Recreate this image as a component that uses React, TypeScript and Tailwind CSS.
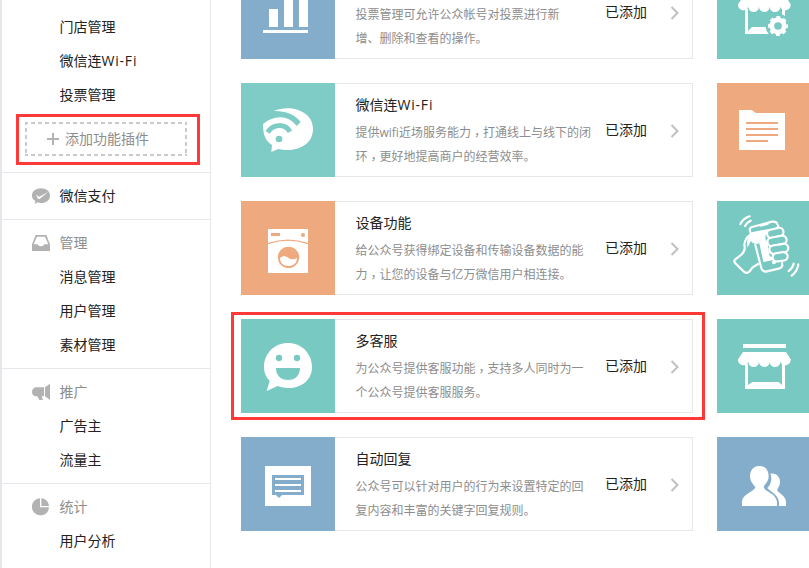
import React from "react";

type IconProps = { box: string; children: React.ReactNode };

const Drawing = ({ box, children }: IconProps) => (
  <svg viewBox={box} className="block h-[94px] w-[94px]" fill="#fff">
    {children}
  </svg>
);

const ChartIcon = () => (
  <Drawing box="33 -105 282 282">
    <path d="M117 27h27v54h-27zM162-9h27v90h-27zM207-40h27V81h-27zM99 90h135v9H99z" />
  </Drawing>
);

const WifiIcon = () => (
  <Drawing box="33 249 282 282">
    <path d="M132 333C176 312 249 330 249 386C249 439 195 457 145 447L124 456L126 435C108 424 99 408 99 372C132 344 176 344 200 378L212 366C195 343 165 332 132 333Z" />
    <path d="M113 397C129 371 165 370 180 395" fill="none" stroke="#7eccc5" strokeWidth="15" />
    <circle cx="147" cy="417" r="10" fill="#7eccc5" />
  </Drawing>
);

const WasherIcon = () => (
  <Drawing box="33 33 282 282">
    <path d="M114 117h120v132H114z" />
    <g fill="#eea97e">
      <path d="M123 129h27v9h-27z" />
      <circle cx="219" cy="135" r="6" />
      <circle cx="175.500" cy="202" r="32" />
      <path d="M114 161Q174 140 234 161" fill="none" stroke="#eea97e" strokeWidth="4" />
    </g>
    <path d="M150 204C158 196 168 198 176 204S194 208 201 203C201 220 189 228 175 228S150 219 150 204Z" />
  </Drawing>
);

const SmileIcon = () => (
  <Drawing box="33 387 282 282">
    <path d="M174 459C214 459 246 490 246 531C246 570 215 594 175 594C163 594 154 592 143 588L110 603L119 573C108 562 102 549 102 531C102 490 134 459 174 459Z" />
    <g fill="#78c9c2">
      <circle cx="147" cy="504" r="9.500" />
      <circle cx="201" cy="504" r="9.500" />
      <path d="M138 534h72C210 556 196 570 174 570S138 556 138 534Z" />
    </g>
  </Drawing>
);

const ReplyIcon = () => (
  <Drawing box="33 201 282 282">
    <path d="M105 288h138v120H105z" />
    <path d="M126 315h96v60h-66l-9 9-9-9h-12z" fill="#84adcc" />
    <path d="M135 324h78v6h-78zM135 342h78v6h-78zM135 360h78v6h-78z" />
  </Drawing>
);

const Awning = () => (
  <path d="M129 486h129l14 22v3a16 16 0 0 1-31 4a16 16 0 0 1-32 0a16 16 0 0 1-32 0a16 16 0 0 1-32 0a16 16 0 0 1-31-4v-3z" />
);

const ShopIcon = () => (
  <Drawing box="51 387 282 282">
    <path d="M129 462h129v12H129z" />
    <Awning />
    <path d="M135 522h9v63l13-9h79l10 9v-63h9v75H135z" />
  </Drawing>
);

const ShopGearIcon = () => (
  <Drawing box="51 -105 282 282">
    <g transform="translate(0 -495)">
      <Awning />
    </g>
    <path d="M135 27h9v66l12-12h41q1 12 9 21h-71zM246 27h9v21l-9-5z" />
    <circle cx="234" cy="78" r="18.500" fill="none" stroke="#fff" strokeWidth="14" />
    <circle cx="234" cy="78" r="26.500" fill="none" stroke="#fff" strokeWidth="7" strokeDasharray="11.800 9.014" strokeDashoffset="5.900" />
  </Drawing>
);

const FolderIcon = () => (
  <Drawing box="51 249 282 282">
    <path d="M117 330h36q5 0 9 5l6 4h87v111H117z" />
    <path d="M138 366h96v6h-96zM138 384h96v6h-96zM138 402h96v6h-96zM138 420h66v6h-66z" fill="#eea97e" />
  </Drawing>
);

const ShakeIcon = () => (
  <Drawing box="-39 -21 282 282">
    <g fill="none" stroke="#fff" strokeWidth="6.500" strokeLinecap="round" strokeLinejoin="round">
      <path d="M31 48Q40 31 59 25M45 54Q50 43 62 38" />
      <path d="M205 169Q202 190 185 203M191 167Q188 180 176 189" />
      <path d="M62 75L59 66Q59 59 66 57L126 41Q139 39 142 48L146 59" />
      <path d="M62 79Q45 90 43 110Q48 128 34 140L16 154Q10 160 16 166L42 191Q51 199 59 190L67 179L84 168" />
      <path d="M76 111L94 181Q98 193 111 190L149 181Q160 176 156 165" />
      <path d="M92 54L114 48" strokeWidth="4.500" />
    </g>
    <path d="M64 73L120 62L108 80Q102 90 112 102L119 145L130 148L132 156L100 162L88 106Q72 112 62 99L53 119Q46 93 64 73Z" />
    <g fill="#78c9c2" stroke="#fff" strokeWidth="6.500">
      <rect x="111" y="62" width="50" height="25" rx="12.500" transform="rotate(-13 136 75)" />
      <rect x="112" y="86" width="58" height="25" rx="12.500" transform="rotate(-11 141 98)" />
      <rect x="118" y="110" width="57" height="25" rx="12.500" transform="rotate(-9 146 122)" />
      <rect x="128" y="134" width="45" height="25" rx="12.500" transform="rotate(-8 150 146)" />
    </g>
    <circle cx="132" cy="163" r="6" />
  </Drawing>
);

const UsersIcon = () => (
  <Drawing box="51 201 282 282">
    <path d="M211 311C230 307 240 322 240 335C240 350 231 355 232 361C233 369 258 376 258 397V408H237V397C235 373 210 364 202 354C214 341 217 324 211 311Z" />
    <path d="M178 288C196 288 206 301 206 319C206 334 195 343 191 350C193 366 231 369 231 398V408H126V398C126 371 163 366 166 351C160 344 150 334 150 319C150 301 160 288 178 288Z" />
  </Drawing>
);

function Line({ text }: { text: string }) {
  const parts = text.split("，");
  return (
    <div className="h-[24px]">
      {parts.map((part, i) => (
        <React.Fragment key={i}>
          {i > 0 && <span className="relative top-[3px] font-['Noto_Sans_CJK_TC',sans-serif] leading-[12px]">，</span>}
          {part}
        </React.Fragment>
      ))}
    </div>
  );
}

const WifiName = () => (
  <>
    微信连<span className="tracking-[0.8px]">Wi-Fi</span>
  </>
);

type CardProps = { color: string; icon: React.ReactNode; title?: React.ReactNode; lines: string[] };

function Card({ color, icon, title, lines }: CardProps) {
  return (
    <div className="flex h-[94px] w-[452px] shrink-0">
      <div className={`w-[94px] shrink-0 ${color}`}>{icon}</div>
      <div className="flex flex-1 items-center border border-l-0 border-[#e7e7eb]">
        <div className="w-[270px] shrink-0 whitespace-nowrap pl-[20.5px] pt-[3px]">
          <div className="h-[22px] text-[14px] leading-[22px] text-[#222]">{title}</div>
          <div className="pt-[5px] text-[12px] leading-[24px] text-[#8d8d8d]">
            {lines.map((l) => (
              <Line key={l} text={l} />
            ))}
          </div>
        </div>
        <span className="w-[65px] shrink-0 text-[14px] leading-[20px] text-[#222]">已添加</span>
        <svg viewBox="0 0 10 14" className="mt-[2px] h-[14px] w-[10px]" fill="none" stroke="#c0c0c0" strokeWidth="2">
          <path d="M1.500 1L7.500 7L1.500 13" />
        </svg>
      </div>
    </div>
  );
}

const rows = [
  {
    card: { color: "bg-[#84adcc]", icon: <ChartIcon />, lines: ["投票管理可允许公众帐号对投票进行新", "增、删除和查看的操作。"] },
    side: { color: "bg-[#78c9c2]", icon: <ShopGearIcon /> },
  },
  {
    card: { color: "bg-[#7eccc5]", icon: <WifiIcon />, title: <WifiName />, lines: ["提供wifi近场服务能力，打通线上与线下的闭", "环，更好地提高商户的经营效率。"] },
    side: { color: "bg-[#eea97e]", icon: <FolderIcon /> },
  },
  {
    card: { color: "bg-[#eea97e]", icon: <WasherIcon />, title: "设备功能", lines: ["给公众号获得绑定设备和传输设备数据的能", "力，让您的设备与亿万微信用户相连接。"] },
    side: { color: "bg-[#78c9c2]", icon: <ShakeIcon /> },
  },
  {
    card: { color: "bg-[#78c9c2]", icon: <SmileIcon />, title: "多客服", lines: ["为公众号提供客服功能，支持多人同时为一", "个公众号提供客服服务。"] },
    side: { color: "bg-[#78c9c2]", icon: <ShopIcon /> },
    marked: true,
  },
  {
    card: { color: "bg-[#84adcc]", icon: <ReplyIcon />, title: "自动回复", lines: ["公众号可以针对用户的行为来设置特定的回", "复内容和丰富的关键字回复规则。"] },
    side: { color: "bg-[#84adcc]", icon: <UsersIcon /> },
  },
];

const Item = ({ children }: { children: React.ReactNode }) => (
  <div className="h-[34px] pl-[57.5px] text-[14px] leading-[34px] text-[#222]">{children}</div>
);

function Heading({ icon, dark, children }: { icon: React.ReactNode; dark?: boolean; children: React.ReactNode }) {
  return (
    <div className={`flex h-[34px] items-center pl-[30px] text-[14px] ${dark ? "text-[#222]" : "text-[#8d8d8d]"}`}>
      <svg viewBox="0 0 54 54" className="mr-[9.5px] h-[18px] w-[18px]" fill="#b2b2b2">
        {icon}
      </svg>
      <span className="pb-[2px]">{children}</span>
    </div>
  );
}

const Section = ({ children }: { children: React.ReactNode }) => (
  <div className="border-t border-[#e7e7eb] py-[6px]">{children}</div>
);

export default function App() {
  return (
    <div className="flex h-[568px] w-[809px] overflow-hidden bg-white font-['Open_Sans','Noto_Sans_CJK_SC',sans-serif]">
      <aside className="w-[211px] shrink-0 border-l-2 border-r border-[#e7e7eb]">
        <div className="h-[172px] pt-[10px]">
          <Item>门店管理</Item>
          <Item>
            <WifiName />
          </Item>
          <Item>投票管理</Item>
          <div className="relative ml-[23px] mt-[10px] h-[34px] w-[162px]">
            <svg viewBox="0 0 162 34" className="absolute inset-0 h-[34px] w-[162px]" fill="none" stroke="#cacaca" strokeWidth="2">
              <path d="M0 1H162M0 33H162" strokeDasharray="4 3" strokeDashoffset="1" />
              <path d="M1 0V34M161 0V34" strokeDasharray="4 3" strokeDashoffset="1" />
            </svg>
            <div className="flex h-[34px] items-center pl-[22px] text-[14px] text-[#8d8d8d]">
              <svg viewBox="0 0 12 12" className="mr-[6px] h-[12px] w-[12px]" stroke="#b2b2b2" strokeWidth="2">
                <path d="M6 0V12M0 6H12" />
              </svg>
              <span className="pb-[2px]">添加功能插件</span>
            </div>
            <div className="absolute -left-[9px] -top-[8px] h-[51px] w-[184px] border-3 border-[#ff3838]" />
          </div>
        </div>
        <Section>
          <Heading
            dark
            icon={
              <>
                <path d="M27 4C42 4 54 13 54 26S42 48 27 48Q21 48 17 46L9 51L10 42Q0 36 0 26C0 13 12 4 27 4Z" />
                <path d="M12 23L22 29L49 14L23 36L18 36Z" fill="#fff" />
              </>
            }
          >
            微信支付
          </Heading>
        </Section>
        <Section>
          <Heading
            icon={<path fillRule="evenodd" d="M11 3H43L54 31V51H0V31ZM15 8L5 31H17C18 39 36 39 37 31H49L39 8Z" />}
          >
            管理
          </Heading>
          <Item>消息管理</Item>
          <Item>用户管理</Item>
          <Item>素材管理</Item>
        </Section>
        <Section>
          <Heading icon={<path d="M12 13H36V40H29L33 51H22L16 40H12C-4 39-4 15 12 13ZM39 13L54 2V51L39 40Z" />}>推广</Heading>
          <Item>广告主</Item>
          <Item>流量主</Item>
        </Section>
        <Section>
          <Heading icon={<path d="M24 1V28H51C50 42 40 52 26 52A25.500 25.500 0 0 1 24 1ZM28 1C41 2 50 11 51 24H28Z" />}>统计</Heading>
          <Item>用户分析</Item>
        </Section>
      </aside>
      <main className="-mt-[35px] flex w-[598px] flex-col gap-[24px] overflow-hidden pl-[30px]">
        {rows.map((row, i) => (
          <div key={i} className="relative flex gap-[24px]">
            <Card {...row.card} />
            <div className={`h-[94px] w-[94px] shrink-0 ${row.side.color}`}>{row.side.icon}</div>
            {row.marked && <div className="absolute -left-[10px] -top-[7px] h-[108px] w-[474px] border-3 border-[#ff3838]" />}
          </div>
        ))}
      </main>
    </div>
  );
}
